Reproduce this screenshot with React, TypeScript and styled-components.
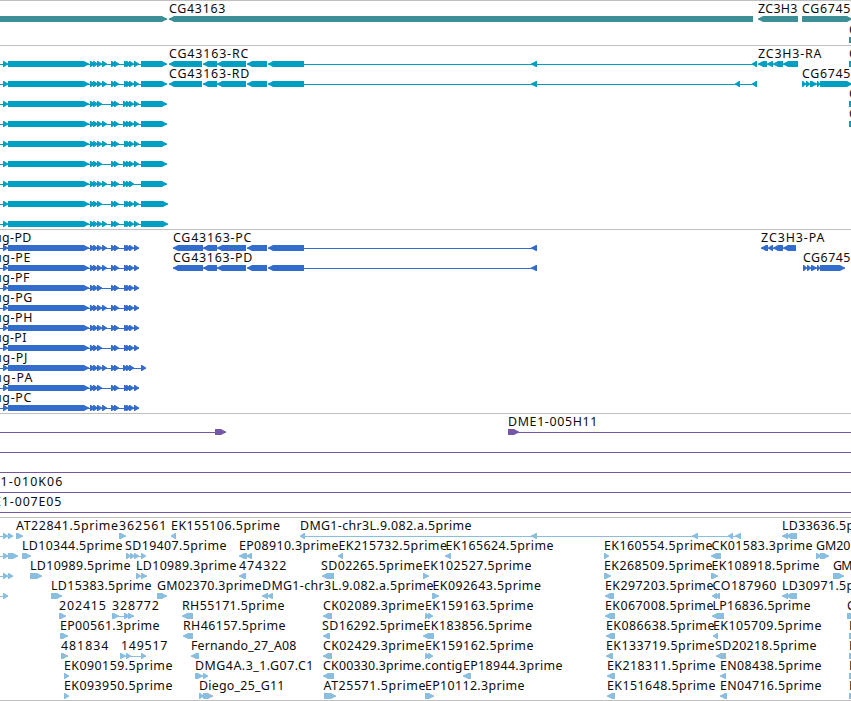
import React from "react";
import styled, { createGlobalStyle } from "styled-components";

type Span = [number, number];
type Name = [string, number, number];

interface IRow {
  names?: Name[];
  lines?: Span[];
  right?: Span[];
  left?: Span[];
}

interface ITrack {
  id: string;
  color: string;
  height: number;
  rowHeight: number;
  rows: IRow[];
}

const GlobalStyle = createGlobalStyle`
  body {
    margin: 0;
    background: white;
    overflow: hidden;
  }
`;

const Browser = styled.main`
  width: 851px;
  height: 701px;
  overflow: hidden;
  background: white;
  border-bottom: 1px solid #bfbfbf;
  box-sizing: border-box;
`;

const TrackSection = styled.section<{ $height: number }>`
  display: flex;
  flex-direction: column;
  box-sizing: border-box;
  height: ${(props) => props.$height}px;
  border-top: 1px solid #bfbfbf;
`;

const Lane = styled.svg<{ $color: string }>`
  display: block;
  flex: none;
  width: 851px;
  overflow: visible;
  fill: ${(props) => props.$color};
`;

const Label = styled.text`
  font-family: "Noto Sans", "Open Sans", sans-serif;
  font-size: 12.4px;
  fill: #0c0c0c;
`;

// exons of the long gene on the left edge
const pug = (four: boolean, start: number, last: boolean): Span[] => {
  const spans: Span[] = [[3, 8], [8, 89], [90, 95], [93, 98], [97, 102]];
  if (four) spans.push([102, 107]);
  spans.push([111, 116], [114, 119], [start, start + 5], [126, 131], [129, 134]);
  if (last) spans.push([134, 139]);
  return spans;
};

const transcript = (four: boolean, start: number, last: boolean, end: number): IRow => ({
  lines: [[0, 141]],
  right: [...pug(four, start, last), [141, end]],
});

const protein = (name: string, end: number, four: boolean): IRow => ({
  names: [[name, -5, end]],
  lines: [[0, 139]],
  right: pug(four, 124, true),
});

const merge = (a: IRow, b: IRow): IRow => ({
  names: [...(a.names || []), ...(b.names || [])],
  lines: [...(a.lines || []), ...(b.lines || [])],
  right: [...(a.right || []), ...(b.right || [])],
  left: [...(a.left || []), ...(b.left || [])],
});

const edge: IRow = { names: [["C", 850, 857]], right: [[849, 860]] };

const tracks: ITrack[] = [
  {
    id: "gene",
    color: "#3e8e95",
    height: 45,
    rowHeight: 21,
    rows: [
      {
        names: [["CG43163", 170, 225], ["ZC3H3", 759, 797], ["CG6745", 803, 850]],
        right: [[0, 167], [802, 852]],
        left: [[169, 753], [758, 798]],
      },
      { names: [["C", 850, 857]], right: [[849, 870]] },
    ],
  },
  {
    id: "transcript",
    color: "#009fc2",
    height: 184,
    rowHeight: 20,
    rows: [
      merge(merge(transcript(true, 124, true, 167), edge), {
        names: [["CG43163-RC", 170, 248], ["ZC3H3-RA", 759, 821]],
        lines: [[304, 757]],
        left: [[169, 202], [203, 217], [217, 246], [247, 267], [268, 304], [531, 537], [752, 757], [758, 767], [767, 773], [773, 783], [783, 798]],
      }),
      merge(transcript(true, 124, true, 167), {
        names: [["CG43163-RD", 170, 249], ["CG6745", 803, 850]],
        lines: [[304, 757]],
        right: [[802, 806], [806, 810], [810, 817], [817, 820], [820, 852]],
        left: [[169, 202], [203, 217], [217, 246], [247, 267], [268, 304], [531, 537], [735, 740], [752, 757]],
      }),
      merge(transcript(false, 123, true, 167), edge),
      merge(transcript(true, 123, true, 167), edge),
      transcript(true, 124, true, 167),
      transcript(false, 123, true, 167),
      transcript(true, 123, false, 167),
      transcript(false, 124, true, 168),
      transcript(true, 124, true, 168),
    ],
  },
  {
    id: "protein",
    color: "#326ccc",
    height: 184,
    rowHeight: 20,
    rows: [
      merge(protein("ug-PD", 31, true), {
        names: [["CG43163-PC", 174, 251], ["ZC3H3-PA", 762, 824]],
        lines: [[304, 537]],
        left: [[173, 203], [203, 217], [217, 246], [247, 267], [268, 304], [531, 537], [761, 768], [768, 773], [773, 783], [783, 796]],
      }),
      merge(protein("ug-PE", 30, true), {
        names: [["CG43163-PD", 174, 252], ["CG6745", 804, 850]],
        lines: [[304, 537]],
        right: [[803, 807], [807, 811], [811, 817], [817, 820], [820, 845]],
        left: [[173, 203], [203, 217], [217, 246], [247, 267], [268, 304], [531, 537]],
      }),
      protein("ug-PF", 29, false),
      protein("ug-PG", 32, true),
      protein("ug-PH", 32, true),
      protein("ug-PI", 26, false),
      { names: [["ug-PJ", -5, 27]], lines: [[0, 146]], right: [...pug(true, 123, false), [141, 146]] },
      protein("ug-PA", 32, false),
      protein("ug-PC", 31, true),
    ],
  },
  {
    id: "clone",
    color: "#7557a8",
    height: 104,
    rowHeight: 20,
    rows: [
      { names: [["DME1-005H11", 509, 597]], lines: [[0, 216], [516, 851]], right: [[215, 226], [508, 519]] },
      { lines: [[0, 851]] },
      { lines: [[0, 851]] },
      { names: [["DME1-010K06", -29, 62]], lines: [[0, 851]] },
      { names: [["DME1-007E05", -27, 61]], lines: [[0, 851]] },
    ],
  },
  {
    id: "est",
    color: "#89bede",
    height: 183,
    rowHeight: 20,
    rows: [
      {
        names: [["AT22841.5prime", 17, 117.5], ["362561", 120, 166], ["EK155106.5prime", 172, 279.5], ["DMG1-chr3L.9.082.a.5prime", 301, 471], ["LD33636.5prime", 783, 882]],
        lines: [[0, 13], [304, 741]],
        right: [[3, 8], [8, 13], [16, 23], [119, 126]],
        left: [[171, 176], [300, 305], [531, 537], [692, 698], [728, 733], [735, 741], [782, 788], [786, 797]],
      },
      {
        names: [["LD10344.5prime", 23, 122], ["SD19407.5prime", 126, 226], ["EP08910.3prime", 240, 338], ["EK215732.5prime", 339.5, 446.5], ["EK165624.5prime", 446.5, 553], ["EK160554.5prime", 605, 712], ["CK01583.3prime", 712.5, 812], ["GM20", 817, 850]],
        lines: [[0, 8], [130, 146]],
        right: [[3, 8], [8, 18], [22, 31], [126, 131], [130, 135], [134, 139], [141, 146], [604, 609], [816, 822], [820, 829]],
        left: [[239, 247], [246, 252], [338, 343], [445, 451], [711, 721]],
      },
      {
        names: [["LD10989.5prime", 31, 130], ["LD10989.3prime", 137, 236], ["474322", 240, 286], ["SD02265.5prime", 322, 422], ["EK102527.5prime", 424, 531], ["EK268509.5prime", 605, 712], ["EK108918.5prime", 712.5, 819], ["GM", 834, 852]],
        lines: [[0, 13]],
        right: [[3, 8], [8, 13], [30, 42], [136, 141], [141, 147], [423, 429], [604, 611], [711, 718], [833, 844]],
        left: [[239, 246], [322, 334]],
      },
      {
        names: [["LD15383.5prime", 52, 151], ["GM02370.3prime", 158, 261], ["DMG1-chr3L.9.082.a.5prime", 263, 433], ["EK092643.5prime", 433.5, 540.5], ["EK297203.5prime", 606, 713], ["CO187960", 713.5, 776], ["LD30971.5prime", 783, 882]],
        lines: [[0, 8]],
        right: [[3, 8], [51, 62], [157, 167], [432, 439]],
        left: [[262, 268], [267, 273], [605, 614], [712, 717], [715, 720], [782, 788], [786, 797]],
      },
      {
        names: [["202415", 60, 105.5], ["328772", 113, 158.5], ["RH55171.5prime", 183, 284], ["CK02089.3prime", 324, 424], ["EK159163.5prime", 426, 533], ["EK067008.5prime", 606, 713], ["LP16836.5prime", 713.5, 810], ["C", 848, 855]],
        lines: [[112, 134]],
        right: [[59, 66], [112, 119], [124, 130], [128, 134], [425, 430], [428, 433], [847, 857]],
        left: [[182, 193], [323, 332], [605, 615], [712, 724]],
      },
      {
        names: [["EP00561.3prime", 61, 159], ["RH46157.5prime", 184, 285], ["SD16292.5prime", 323, 423], ["EK183856.5prime", 424.5, 531.5], ["EK086638.5prime", 607, 714], ["EK105709.5prime", 714, 821], ["E", 850, 856]],
        right: [[60, 68], [849, 857]],
        left: [[183, 193], [323, 330], [423, 434], [606, 615], [713, 718]],
      },
      {
        names: [["481834", 62, 108], ["149517", 122, 167], ["Fernando_27_A08", 192, 296], ["CK02429.3prime", 324, 424], ["EK159162.5prime", 426, 533], ["EK133719.5prime", 607, 714], ["SD20218.5prime", 716, 816], ["E", 850, 856]],
        lines: [[126, 146]],
        right: [[61, 68], [120, 126], [126, 131], [141, 146], [425, 430], [428, 433], [849, 857]],
        left: [[191, 199], [323, 332], [606, 613], [716, 726]],
      },
      {
        names: [["EK090159.5prime", 65, 172], ["DMG4A.3_1.G07.C1", 196, 313], ["CK00330.3prime.contig", 324, 462], ["EP18944.3prime", 464, 562], ["EK218311.5prime", 608, 715], ["EN08438.5prime", 721, 821], ["E", 850, 856]],
        lines: [[200, 204]],
        right: [[64, 69], [195, 203], [203, 208], [849, 857]],
        left: [[323, 334], [463, 471], [607, 615], [720, 726]],
      },
      {
        names: [["EK093950.5prime", 65, 172], ["Diego_25_G11", 200, 284], ["AT25571.5prime", 324.5, 425], ["EP10112.3prime", 426, 524], ["EK151648.5prime", 608, 715], ["EN04716.5prime", 721, 821], ["E", 850, 856]],
        right: [[64, 69], [199, 204], [203, 213], [324, 336], [425, 434], [849, 857]],
        left: [[607, 615], [720, 727]],
      },
    ],
  },
];

interface IFeature {
  span: Span;
  reverse?: boolean;
}

const Feature: React.FC<IFeature> = ({ span, reverse }) => {
  const [a, b] = span;
  // the flanks bulge a little before they run to the tip
  const head = Math.min(5, b - a - 1);
  const tip = reverse ? a : b;
  const tail = reverse ? b : a;
  const step = reverse ? 1 : -1;
  const neck = tip + step * head;
  const flank = tip + step * head * 0.45;
  const points = `${tail},15 ${neck},15 ${flank},16.4 ${tip},17.5 ${tip},18.7 ${flank},19.6 ${neck},21 ${tail},21`;
  return <polygon points={points} />;
};

interface ILaneRow {
  row: IRow;
  color: string;
  height: number;
}

const LaneRow: React.FC<ILaneRow> = ({ row, color, height }) => {
  return (
    <Lane $color={color} height={height}>
      {row.lines?.map(([a, b]) => (
        <rect key={`${a}-${b}`} x={a} y={18} width={b - a} height={1} />
      ))}
      {row.right?.map((span) => (
        <Feature key={span.join()} span={span} />
      ))}
      {row.left?.map((span) => (
        <Feature key={span.join()} span={span} reverse />
      ))}
      {row.names?.map(([name, start, end]) => (
        <Label key={name + start} x={start - 1} y={12} textLength={end - start + 1.4}>
          {name}
        </Label>
      ))}
    </Lane>
  );
};

const App: React.FC = () => {
  return (
    <>
      <GlobalStyle />
      <Browser>
        {tracks.map((track) => (
          <TrackSection key={track.id} $height={track.height}>
            {track.rows.map((row, index) => (
              <LaneRow key={index} row={row} color={track.color} height={track.rowHeight} />
            ))}
          </TrackSection>
        ))}
      </Browser>
    </>
  );
};

export default App;
